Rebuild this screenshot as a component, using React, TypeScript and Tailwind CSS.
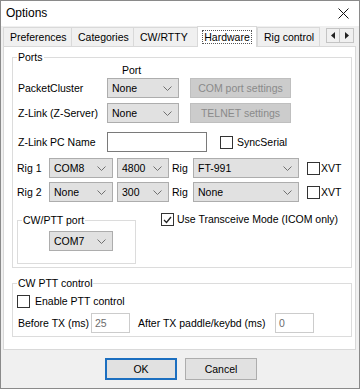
import React from "react";

const Chevron = () => (
  <svg width="9" height="5" viewBox="0 0 9 5" className="shrink-0">
    <path d="M0.5 0.5L4.5 4.5L8.5 0.5" fill="none" stroke="#707070" />
  </svg>
);

const Combo = ({ value, className = "" }: { value: string; className?: string }) => (
  <div
    className={`flex h-[20px] shrink-0 items-center justify-between border border-[#adadad] bg-[#e1e1e1] pl-[4px] pr-[6px] ${className}`}
  >
    <span>{value}</span>
    <Chevron />
  </div>
);

const Check = ({ checked = false, className = "" }: { checked?: boolean; className?: string }) => (
  <span
    className={`flex h-[13px] w-[13px] shrink-0 items-center justify-center border border-[#333333] bg-white ${className}`}
  >
    {checked && (
      <svg width="9" height="8" viewBox="0 0 9 8">
        <path d="M1 4L3.5 6.5L8 1" fill="none" stroke="#222222" strokeWidth="1.3" />
      </svg>
    )}
  </span>
);

const DisabledButton = ({ label, className = "" }: { label: string; className?: string }) => (
  <div
    className={`flex h-[20px] shrink-0 items-center justify-center border border-[#bfbfbf] bg-[#cccccc] text-[#8a8a8a] ${className}`}
  >
    {label}
  </div>
);

const Tab = ({ label, className = "" }: { label: string; className?: string }) => (
  <div
    className={`flex h-[19px] items-center border-l border-t border-[#d9d9d9] bg-[#f0f0f0] pl-[6px] ${className}`}
  >
    {label}
  </div>
);

export default function App() {
  return (
    <div className="h-[389px] w-[360px] overflow-hidden whitespace-nowrap border border-[#8a8a8a] bg-[#f0f0f0] font-['Liberation_Sans',Arial,sans-serif] text-[10.5px] leading-[13px] text-black">
      {/* Title bar */}
      <div className="flex h-[25px] items-center justify-between bg-white pl-[5px] pr-[10px]">
        <span className="text-[12px]">Options</span>
        <svg width="11" height="11" viewBox="0 0 11 11">
          <path d="M0.5 0.5L10.5 10.5M10.5 0.5L0.5 10.5" stroke="#111111" strokeWidth="1" />
        </svg>
      </div>

      <div className="pl-[2px]">
        {/* Tab strip */}
        <div className="flex h-[20px] items-end">
          <Tab label="Preferences" className="w-[68px]" />
          <Tab label="Categories" className="w-[62px]" />
          <Tab label="CW/RTTY" className="w-[64px]" />
          <div className="relative z-10 -mb-px flex h-[21px] w-[60px] items-center justify-center border-x border-t border-[#d9d9d9] bg-white">
            <span className="border border-dotted border-[#555555] px-[1px] leading-[12px]">Hardware</span>
          </div>
          <Tab label="Rig control" className="w-[63px] border-r" />
          <div className="mb-[3px] ml-[6px] flex h-[15px]">
            <div className="flex w-[14px] items-center justify-center border border-[#c4c4c4] bg-[#f0f0f0]">
              <svg width="4" height="7" viewBox="0 0 4 7">
                <path d="M4 0L0 3.5L4 7Z" fill="#222222" />
              </svg>
            </div>
            <div className="flex w-[14px] items-center justify-center border-y border-r border-[#c4c4c4] bg-[#f0f0f0]">
              <svg width="4" height="7" viewBox="0 0 4 7">
                <path d="M0 0L4 3.5L0 7Z" fill="#222222" />
              </svg>
            </div>
          </div>
        </div>

        {/* Tab page */}
        <div className="w-[353px] border border-[#d9d9d9] bg-white pb-[12px] pl-[8px] pt-[4px]">
          <fieldset className="w-[340px] border border-[#dcdcdc] pb-[3px]">
            <legend className="ml-[4px] px-[1px] leading-[13px]">Ports</legend>
            <div className="ml-[109px] h-[12px] leading-[12px]">Port</div>

            <div className="mt-[2px] flex h-[20px] items-center">
              <span className="ml-[5px] w-[89px]">PacketCluster</span>
              <Combo value="None" className="w-[72px]" />
              <DisabledButton label="COM port settings" className="ml-[11px] w-[101px]" />
            </div>

            <div className="mt-[5px] flex h-[20px] items-center">
              <span className="ml-[5px] w-[89px]">Z-Link (Z-Server)</span>
              <Combo value="None" className="w-[72px]" />
              <DisabledButton label="TELNET settings" className="ml-[11px] w-[101px]" />
            </div>

            <div className="mt-[9px] flex h-[20px] items-center">
              <span className="ml-[5px] w-[89px]">Z-Link PC Name</span>
              <div className="h-[20px] w-[100px] border border-[#7a7a7a] bg-white" />
              <Check className="ml-[13px]" />
              <span className="ml-[4px]">SyncSerial</span>
            </div>

            <div className="mt-[6px] flex h-[20px] items-center">
              <span className="ml-[4px] w-[32px]">Rig 1</span>
              <Combo value="COM8" className="w-[64px]" />
              <Combo value="4800" className="ml-[4px] w-[52px]" />
              <span className="ml-[3px] w-[21px]">Rig</span>
              <Combo value="FT-991" className="w-[106px]" />
              <Check className="ml-[8px]" />
              <span className="ml-[1px]">XVT</span>
            </div>

            <div className="mt-[4px] flex h-[20px] items-center">
              <span className="ml-[4px] w-[32px]">Rig 2</span>
              <Combo value="None" className="w-[64px]" />
              <Combo value="300" className="ml-[4px] w-[52px]" />
              <span className="ml-[3px] w-[21px]">Rig</span>
              <Combo value="None" className="w-[106px]" />
              <Check className="ml-[8px]" />
              <span className="ml-[1px]">XVT</span>
            </div>

            <div className="mt-[12px] flex items-start">
              <fieldset className="ml-[4px] h-[50px] w-[119px] border border-[#dcdcdc]">
                <legend className="ml-[4px] px-[1px] leading-[13px]">CW/PTT port</legend>
                <Combo value="COM7" className="ml-[31px] mt-[4px] w-[64px]" />
              </fieldset>
              <div className="-mt-px ml-[25px] flex items-center">
                <Check checked />
                <span className="ml-[3px]">Use Transceive Mode (ICOM only)</span>
              </div>
            </div>
          </fieldset>

          <fieldset className="mt-[9px] w-[340px] border border-[#dcdcdc] pb-[3px]">
            <legend className="ml-[4px] px-[1px] leading-[13px]">CW PTT control</legend>
            <div className="mt-[5px] flex h-[13px] items-center">
              <Check className="ml-[4px]" />
              <span className="ml-[5px]">Enable PTT control</span>
            </div>
            <div className="mt-[5px] flex h-[20px] items-center">
              <span className="ml-[5px] w-[73px]">Before TX (ms)</span>
              <div className="flex h-[20px] w-[39px] items-center border border-[#cccccc] bg-white pl-[3px] text-[#6d6d6d]">
                25
              </div>
              <span className="ml-[8px] w-[137px]">After TX paddle/keybd (ms)</span>
              <div className="flex h-[20px] w-[39px] items-center border border-[#cccccc] bg-white pl-[3px] text-[#6d6d6d]">
                0
              </div>
            </div>
          </fieldset>
        </div>

        {/* Buttons */}
        <div className="ml-[102px] mt-[8px] flex gap-[8px]">
          <div className="flex h-[22px] w-[72px] items-center justify-center border-2 border-[#1c6fc0] bg-[#e1e1e1]">
            OK
          </div>
          <div className="flex h-[22px] w-[72px] items-center justify-center border border-[#adadad] bg-[#e1e1e1]">
            Cancel
          </div>
        </div>
      </div>
    </div>
  );
}
